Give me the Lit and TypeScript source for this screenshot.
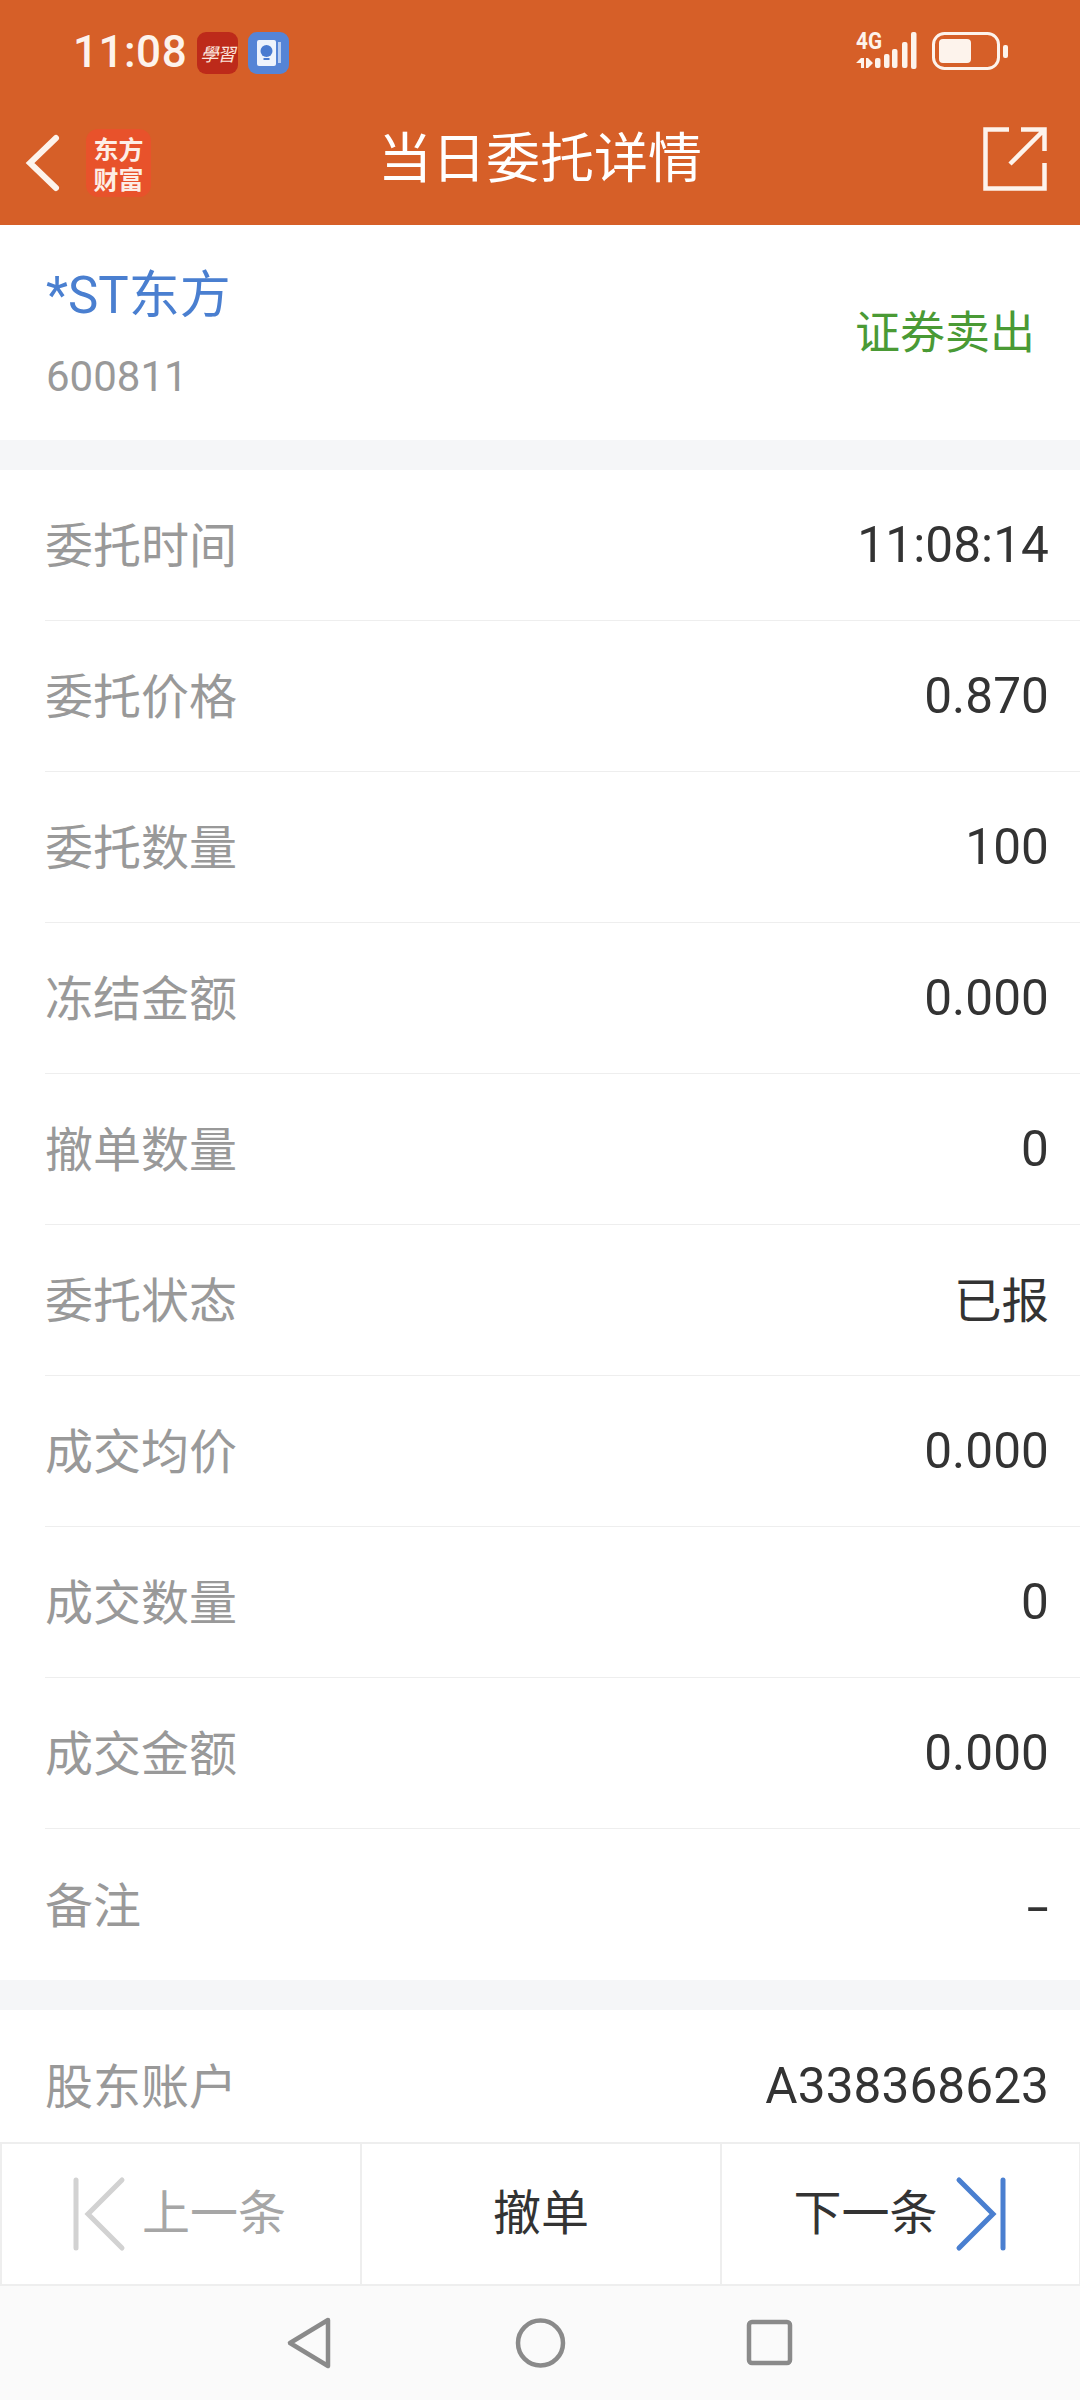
import { LitElement, html, css, svg } from 'lit';
import { customElement } from 'lit/decorators.js';

const rows = [
    ['委托时间', '11:08:14'],
    ['委托价格', '0.870'],
    ['委托数量', '100'],
    ['冻结金额', '0.000'],
    ['撤单数量', '0'],
    ['委托状态', '已报'],
    ['成交均价', '0.000'],
    ['成交数量', '0'],
    ['成交金额', '0.000'],
    ['备注', '-'],
];

// x, y, height of the signal bars
const signalBars = [
    [19, 26, 10], [28, 22, 14], [36, 17, 19], [46, 10, 26], [55, 0, 37],
];

@customElement('app-root')
export class AppRoot extends LitElement {
    static styles = css`
        :host {
            display: flex;
            flex-direction: column;
            height: 2400px;
            overflow: hidden;
            background: #fff;
            font-family: Roboto, 'Noto Sans CJK SC', sans-serif;
        }
        svg { display: block; flex: none; overflow: visible; }

        .header { background: #d65f28; color: #fff; height: 225px; flex: none; display: flex; flex-direction: column; }
        .status { height: 100px; padding: 26px 71px 0 73px; box-sizing: border-box; display: flex; align-items: flex-start; }
        .clock { font-size: 44px; font-weight: 500; line-height: 52px; color: #fdf3ec; width: 124px; letter-spacing: 0.5px; }
        .app-icon { width: 41px; height: 42px; border-radius: 9px; margin-top: 6px; margin-right: 10px; flex: none; }
        .study { background: #bd2a1a; color: #fbe4dc; font-size: 18px; font-style: italic; line-height: 42px; text-align: center; letter-spacing: -1px; font-family: 'Noto Sans CJK TC', sans-serif; }
        .status-right { margin-left: auto; display: flex; gap: 14px; margin-top: 6px; }

        .bar { flex: 1; display: flex; align-items: center; padding: 0 33px 0 27px; position: relative; }
        .logo { width: 65px; height: 68px; margin-left: 27px; border-radius: 12px; background: #e8522b; color: #fdeee6; font-family: 'Noto Sans CJK SC', sans-serif; font-weight: 700; font-size: 25px; line-height: 30px; text-align: center; display: flex; flex-direction: column; justify-content: center; }
        .title { position: absolute; left: 50%; top: 28px; transform: translateX(-50%); white-space: nowrap; font-size: 54px; line-height: 64px; }
        .share { margin-left: auto; margin-bottom: 8px; }

        .content { flex: 1; min-height: 0; overflow: hidden; }
        .stock { height: 215px; box-sizing: border-box; padding: 2px 45px 0 46px; display: flex; align-items: center; justify-content: space-between; }
        .name { font-size: 51px; line-height: 60px; color: #4a7fd0; }
        .code { font-size: 42px; line-height: 50px; color: #999; margin-top: 26px; }
        .side { font-size: 45px; line-height: 56px; color: #4a9a35; margin-top: 1px; }
        .gap { height: 30px; background: #f5f6f8; }

        .row { height: 151px; box-sizing: border-box; margin-left: 45px; padding-right: 31px; border-bottom: 1px solid #eeeeee; display: flex; align-items: center; justify-content: space-between; }
        .row.last { border-bottom: none; }
        .label { font-size: 48px; color: #999; margin-bottom: 6px; }
        .value { font-size: 49.5px; letter-spacing: 0.1px; color: #333; }
        .value.text { font-size: 47.5px; letter-spacing: 0; margin-bottom: 6px; }
        .value.dash { transform: scaleX(1.6); transform-origin: right center; margin-top: 4px; }

        .actions { flex: none; height: 144px; display: grid; grid-template-columns: repeat(3, 1fr); background: #fff; border-top: 2px solid #eeeeee; border-bottom: 2px solid #eeeeee; box-sizing: border-box; }
        .action { display: flex; align-items: center; justify-content: center; font-size: 48px; color: #333; border-left: 2px solid #eeeeee; box-sizing: border-box; gap: 14px; }
        .action span { margin-bottom: 10px; }
        .action:last-child { border-right: 1px solid #eeeeee; }
        .action.off { color: #a6a6a6; padding-right: 4px; }

        .nav { flex: none; height: 114px; background: #fafafa; position: relative; }
        .nav svg { position: absolute; left: 0; top: 0; }
    `;

    renderSignal() {
        return html`<svg width="62" height="38" viewBox="0 0 62 38" fill="#fdf3ec">
            <text x="0" y="17" font-size="23" font-weight="700" font-family="Roboto" textLength="26" lengthAdjust="spacingAndGlyphs">4G</text>
            <path d="M0 31 L5 26 H8 V36 H5 V31Z M10 26 H12 L17 31 L12 36 H10Z"/>
            ${signalBars.map(([x, y, h]) => svg`<rect x=${x} y=${y} width="5.5" height=${h} rx="2"/>`)}
        </svg>`;
    }

    valueClass(value: string) {
        if (value === '已报') return 'text';
        if (value === '-') return 'dash';
        return '';
    }

    render() {
        return html`
            <div class="header">
                <div class="status">
                    <div class="clock">11:08</div>
                    <div class="app-icon study">學習</div>
                    <svg class="app-icon" viewBox="0 0 41 42">
                        <rect width="41" height="42" rx="9" fill="#5584d6"/>
                        <rect x="9" y="8" width="19" height="26" rx="2" fill="#eef3fc"/>
                        <rect x="30" y="10" width="3" height="21" fill="#b9cdf0"/>
                        <circle cx="18.5" cy="19" r="6" fill="#4a7bd0"/>
                        <rect x="15.5" y="26" width="6" height="2" fill="#4a7bd0"/>
                    </svg>
                    <div class="status-right">
                        ${this.renderSignal()}
                        <svg width="77" height="38" viewBox="0 0 77 38">
                            <rect x="1.5" y="1.5" width="65" height="35" rx="11" fill="none" stroke="#fdf3ec" stroke-width="3"/>
                            <rect x="7" y="7" width="32" height="24" rx="4" fill="#fdf3ec"/>
                            <rect x="71" y="13" width="5" height="13" rx="2" fill="#fdf3ec"/>
                        </svg>
                    </div>
                </div>
                <div class="bar">
                    <svg width="32" height="56" viewBox="0 0 32 56" fill="none" stroke="#fdf3ec" stroke-width="6" stroke-linecap="round">
                        <path d="M29 3 L3 28 L29 53"/>
                    </svg>
                    <div class="logo"><div>东方</div><div>财富</div></div>
                    <div class="title">当日委托详情</div>
                    <svg class="share" width="64" height="64" viewBox="0 0 64 64" fill="none" stroke="#fdf3ec" stroke-width="4.5">
                        <path d="M26 2.5 H2.5 V61.5 H61.5 V36"/>
                        <path d="M27 37 L61 3 M38 2.5 H61.5 V24"/>
                    </svg>
                </div>
            </div>

            <div class="content">
                <div class="stock">
                    <div>
                        <div class="name">*ST东方</div>
                        <div class="code">600811</div>
                    </div>
                    <div class="side">证券卖出</div>
                </div>
                <div class="gap"></div>
                ${rows.map(([label, value], i) => html`
                    <div class="row ${i === rows.length - 1 ? 'last' : ''}">
                        <span class="label">${label}</span>
                        <span class="value ${this.valueClass(value)}">${value}</span>
                    </div>`)}
                <div class="gap"></div>
                <div class="row last">
                    <span class="label">股东账户</span>
                    <span class="value">A338368623</span>
                </div>
            </div>

            <div class="actions">
                <div class="action off">
                    <svg width="56" height="72" viewBox="0 0 56 72" fill="none" stroke-width="5" stroke-linecap="round">
                        <path d="M4 2 V70" stroke="#d2d2d2"/>
                        <path d="M50 2 L16 36 L50 70" stroke="#d2d2d2"/>
                    </svg>
                    <span>上一条</span>
                </div>
                <div class="action"><span>撤单</span></div>
                <div class="action">
                    <span>下一条</span>
                    <svg width="56" height="72" viewBox="0 0 56 72" fill="none" stroke-width="5" stroke-linecap="round">
                        <path d="M7 2 L41 36 L7 70" stroke="#4a7fd0"/>
                        <path d="M51 2 V70" stroke="#4a7fd0"/>
                    </svg>
                </div>
            </div>

            <div class="nav">
                <svg width="1080" height="114" viewBox="0 0 1080 114" fill="none" stroke="#8a8a8a" stroke-width="4.5" stroke-linejoin="round">
                    <path d="M328 34 L290 57 L328 80 Z"/>
                    <circle cx="540.5" cy="57" r="22.5"/>
                    <rect x="749" y="36" width="41" height="41" rx="3"/>
                </svg>
            </div>
        `;
    }
}
